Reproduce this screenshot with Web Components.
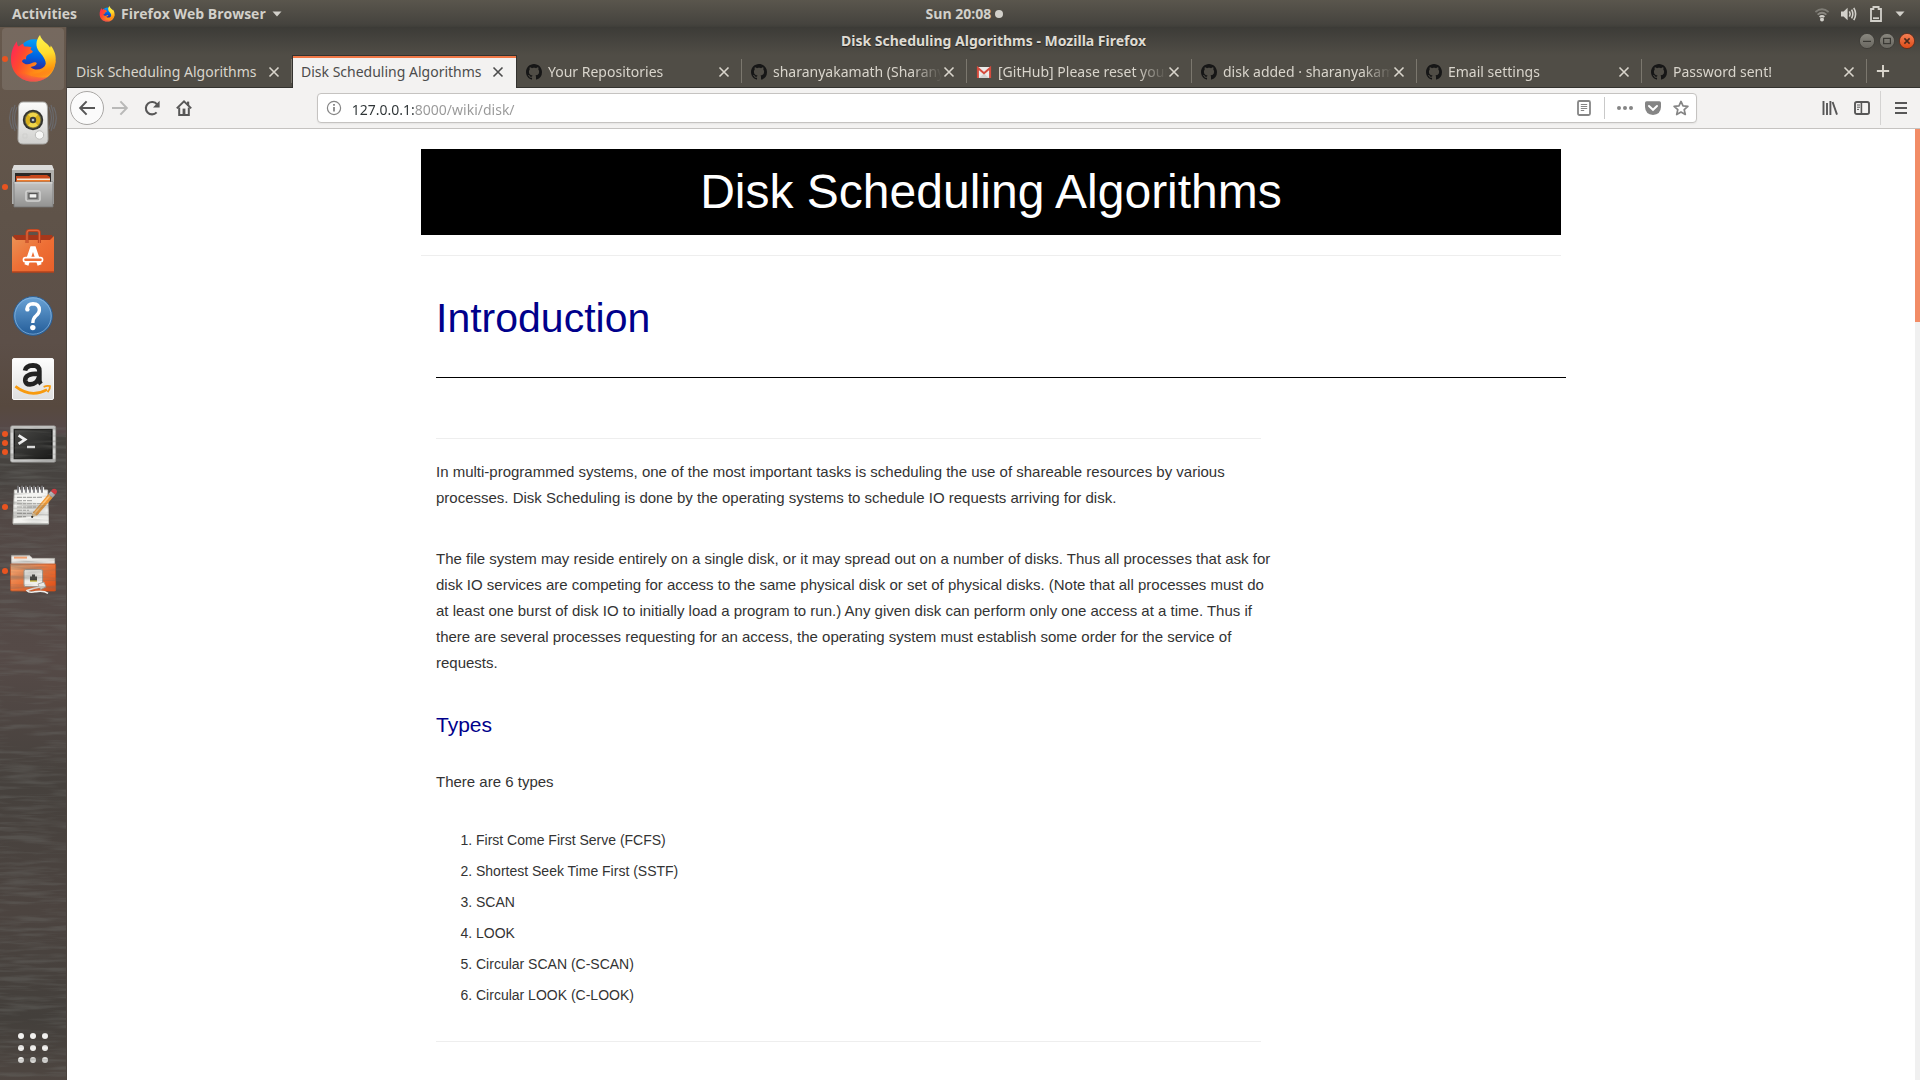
<!DOCTYPE html>
<html lang="en">
<head>
<meta charset="utf-8">
<title>Disk Scheduling Algorithms - Mozilla Firefox</title>
<style>
  html, body { height: 100%; }
  body { margin: 0; display: flex; flex-direction: column; overflow: hidden; background: #fff;
         font-family: "Noto Sans", "Open Sans", sans-serif; font-size: 14px; }
  .desk { display: flex; flex: 1; min-height: 0; }
  browser-window { flex: 1; min-width: 0; }
</style>
</head>
<body>
<top-bar></top-bar>
<div class="desk">
  <side-dock>
    <dock-item icon="firefox" label="Firefox Web Browser" windows="1" active></dock-item>
    <dock-item icon="rhythmbox" label="Rhythmbox"></dock-item>
    <dock-item icon="files" label="Files" windows="1"></dock-item>
    <dock-item icon="software" label="Ubuntu Software"></dock-item>
    <dock-item icon="help" label="Help"></dock-item>
    <dock-item icon="amazon" label="Amazon"></dock-item>
    <dock-item icon="terminal" label="Terminal" windows="3"></dock-item>
    <dock-item icon="gedit" label="Text Editor" windows="1"></dock-item>
    <dock-item icon="netfolder" label="Network Folder" windows="1"></dock-item>
    <dock-item slot="end" icon="grid" label="Show Applications"></dock-item>
  </side-dock>
  <browser-window>
    <span slot="title">Disk Scheduling Algorithms - Mozilla Firefox</span>
    <browser-tab slot="tabs">Disk Scheduling Algorithms</browser-tab>
    <browser-tab slot="tabs" active>Disk Scheduling Algorithms</browser-tab>
    <browser-tab slot="tabs" icon="github">Your Repositories</browser-tab>
    <browser-tab slot="tabs" icon="github">sharanyakamath (Sharanya Kamath)</browser-tab>
    <browser-tab slot="tabs" icon="gmail">[GitHub] Please reset your password</browser-tab>
    <browser-tab slot="tabs" icon="github">disk added · sharanyakamath</browser-tab>
    <browser-tab slot="tabs" icon="github">Email settings</browser-tab>
    <browser-tab slot="tabs" icon="github">Password sent!</browser-tab>
    <wiki-page></wiki-page>
  </browser-window>
</div>

<script>
const ICONS = {
  firefox: ['0 0 48 48', `
    <defs>
      <linearGradient id="g" x1="0.5" y1="0" x2="0.4" y2="1"><stop offset="0" stop-color="#00a0fa"/><stop offset=".55" stop-color="#0060df"/><stop offset="1" stop-color="#3a1a8a"/></linearGradient>
      <linearGradient id="f" x1="0" y1=".3" x2="1" y2=".7"><stop offset="0" stop-color="#ff2c50"/><stop offset=".25" stop-color="#ff4a2e"/><stop offset=".6" stop-color="#ff8a16"/><stop offset="1" stop-color="#ffa518"/></linearGradient>
      <linearGradient id="t" x1=".3" y1="0" x2=".4" y2="1"><stop offset="0" stop-color="#fff44f"/><stop offset=".45" stop-color="#ffdc2e"/><stop offset=".8" stop-color="#ff980e"/><stop offset="1" stop-color="#ff5a28" stop-opacity="0"/></linearGradient>
      <linearGradient id="b" x1="0" y1="0" x2="0" y2="1"><stop offset="0.6" stop-color="#e31587" stop-opacity="0"/><stop offset="1" stop-color="#e31587" stop-opacity=".55"/></linearGradient>
    </defs>
    <circle cx="25" cy="20.5" r="16.3" fill="url(#g)"/>
    <path fill="url(#f)" d="M8 6.3C7.8 9 8.4 10.8 9.8 11.6 11 10.3 12.6 9.3 14.6 8.6 14.2 9.8 14.6 10.8 15.6 11.6 18 11.2 20.4 11.4 22.6 12.2 21.8 13 21.4 14 21.8 15 23 15.4 23.8 16 23.8 17 22.4 18.8 19.6 19 18 20.4 16.8 21.8 17 23.4 17.2 24.6 15.6 24 13.6 24.4 13 26.4 15 29.4 19 30 22.4 28.2 25 26.8 27.6 27 27.8 28.6 27 31 24 31.6 21.6 32 26 36.4 34 35 37 29 39.4 24 38 19 35 15L46.6 26C46 38.4 36.6 46.6 24.6 46.6 11.8 46.6 2 37.4 2 24.4 2 17 4.2 11 8 6.3Z"/>
    <path fill="url(#b)" d="M2 24.4C2 37.4 11.8 46.6 24.6 46.6 30 46.6 35 45 39 42 28 44 10 40 2 24.4Z"/>
    <path fill="url(#t)" d="M31 0C26.6 5.6 26.4 11.4 30 16.4 35 22 38.8 27 35.6 33 33 38 27 39.6 21 37.6 24 44.6 34 45.6 40.6 39 46.4 33 47.8 25 46 18.6 45 15.4 43.4 12 41.6 10.4 41.6 11.4 41.6 12 41 12.6 39.4 8.6 32.6 6.4 31 0Z"/>`],
  rhythmbox: ['0 0 48 48', `
    <defs><linearGradient id="w" x1="0" y1="0" x2="0" y2="1"><stop offset="0" stop-color="#fbfbfa"/><stop offset="1" stop-color="#d0d0ce"/></linearGradient></defs>
    <g fill="none" stroke="#7488a0" stroke-opacity=".4" stroke-width="1.2"><path d="M6 6Q1 19 6 32M3.4 8Q-2 19 3.4 30M42 6Q47 19 42 32M44.6 8Q50 19 44.6 30M8 8Q3 19 8 30M40 8Q45 19 40 30"/></g>
    <path d="M14 3H34Q38 3 38.4 8L39 40Q39 45 34 45H14Q9 45 9 40L9.6 8Q10 3 14 3Z" fill="url(#w)" stroke="#a9a9a6"/>
    <circle cx="24" cy="21" r="10.2" fill="#33332f"/><circle cx="24" cy="21" r="8.4" fill="#6f6b40"/><circle cx="24" cy="21" r="7.4" fill="#d9b01c"/><path d="M24 21L19 15.6Q24 12 29 15.6ZM24 21L19 26.4Q24 30 29 26.4Z" fill="#f0d64c"/><circle cx="24" cy="21" r="3.2" fill="#3c3c3a"/><circle cx="24" cy="21" r="1.3" fill="#b8c4d0"/>
    <circle cx="30.5" cy="36" r="4.2" fill="#f6f6f5" stroke="#bcbcba"/><path d="M14 35h4v4h-4z" fill="none" stroke="#cfcfcd"/>`],
  files: ['0 0 48 48', `
    <defs><linearGradient id="s" x1="0" y1="0" x2="0" y2="1"><stop offset="0" stop-color="#c4c4c3"/><stop offset="1" stop-color="#929291"/></linearGradient></defs>
    <path d="M5 2H43L45 7V41H3V7Z" fill="#b0b0ae"/><path d="M5 2H43L45 7H3Z" fill="#dcdcdb"/>
    <path d="M6 10H42V20H6Z" fill="#2c2826"/>
    <path d="M7 13H20L22 12H38L41 14V20H7Z" fill="#c8481c"/><path d="M8 15.4H41V20H8Z" fill="#f6e9d8"/><path d="M8 17H41V20H8Z" fill="#ef7d2e"/>
    <path d="M5 19H44V44H5Z" fill="url(#s)" stroke="#777" stroke-width=".8"/><path d="M5.4 19.8H43.6" stroke="#e3e3e2" stroke-width="1"/>
    <rect x="17" y="28" width="14" height="10" rx="1.6" fill="#9a9a99" stroke="#d2d2d1" stroke-width="1.6"/><rect x="20" y="30.6" width="8" height="4.6" fill="#f2f2f1" stroke="#555" stroke-width="1.2"/>`],
  software: ['0 0 48 48', `
    <defs><linearGradient id="o" x1="0" y1="0" x2="1" y2="1"><stop offset="0" stop-color="#eb9356"/><stop offset=".5" stop-color="#ee6f35"/><stop offset="1" stop-color="#e8602a"/></linearGradient></defs>
    <path d="M5 8H43L45 13H3Z" fill="#a6371a"/>
    <path d="M3 9L7 13H41L45 9V45H3Z" fill="url(#o)"/><path d="M3 45H45" stroke="#b5431d" stroke-width="1.4"/>
    <path d="M18 16V6Q18 3.4 20.4 3.4H28Q30.4 3.4 30.4 6V16" fill="none" stroke="#b8421f" stroke-width="3"/><path d="M18 16V6Q18 3.4 20.4 3.4H28Q30.4 3.4 30.4 6V16" fill="none" stroke="#e2683c" stroke-width="1.2"/>
    <path d="M17.4 38L23 21.4H25L30.6 38" fill="none" stroke="#fff" stroke-width="4.2"/><rect x="14.4" y="30.6" width="19.2" height="4.2" rx="2.1" fill="#ee7038" stroke="#fff" stroke-width="1.6"/>`],
  help: ['0 0 48 48', `
    <defs><linearGradient id="h" x1="0" y1="0" x2="0" y2="1"><stop offset="0" stop-color="#6aa3d6"/><stop offset="1" stop-color="#235c98"/></linearGradient></defs>
    <circle cx="24" cy="25" r="19.4" fill="url(#h)" stroke="#2d5e92" stroke-width="1"/><circle cx="24" cy="25" r="18.2" fill="none" stroke="#8dbbe2" stroke-opacity=".7" stroke-width="1"/>
    <path d="M18 18Q18.6 13 24 12.8 30.2 13 30.4 19 30.2 22.4 26.8 25 24 27.4 23.8 32" fill="none" stroke="#fff" stroke-width="3.4"/><circle cx="18.4" cy="18.4" r="2.2" fill="#fff"/><circle cx="23.8" cy="36.6" r="2.7" fill="#fff"/>`],
  amazon: ['0 0 48 48', `
    <defs><linearGradient id="z" x1="0" y1="0" x2="0" y2="1"><stop offset="0" stop-color="#fdfdfd"/><stop offset="1" stop-color="#dedede"/></linearGradient></defs>
    <rect x="3.5" y="3.5" width="41" height="41" rx="1.5" fill="url(#z)" stroke="#f8f8f8"/>
    <path d="M16 15.6Q17 10.6 24 10.4 30.4 10.6 30.4 16V25.4Q30.6 27.4 32 29M30 18.6Q15.8 18.4 16.2 25.4 16.6 29.4 21 29.4 28 29.4 30 22" fill="none" stroke="#222" stroke-width="4.6"/>
    <path d="M6.4 31.4Q22 43.4 38 34.6" fill="none" stroke="#f79a0e" stroke-width="2.6"/><path d="M34.6 31.8Q38.4 30.4 41 31.2 41.4 34 38.6 37.2" fill="none" stroke="#f79a0e" stroke-width="1.9"/>`],
  terminal: ['0 0 48 48', `
    <defs><linearGradient id="k" x1="0" y1="0" x2="1" y2="1"><stop offset="0" stop-color="#474745"/><stop offset="1" stop-color="#1c1c1b"/></linearGradient></defs>
    <rect x="1.6" y="7" width="45" height="36" rx="1.6" fill="#d6d6d5" stroke="#a5a5a3"/><rect x="4.6" y="9.8" width="39" height="30.4" fill="#161615"/><rect x="6" y="11.2" width="36.2" height="27.6" fill="url(#k)"/>
    <path d="M9.6 16.4L16 20.6 9.6 24.8" fill="none" stroke="#f0f0f0" stroke-width="2.8"/><path d="M18 28H26" stroke="#f0f0f0" stroke-width="2.4"/>`],
  gedit: ['0 0 48 48', `
    <path d="M5.4 7H38.6L39.6 40.6H4Z" fill="#f4f4f1" stroke="#c9c9c5"/><path d="M4 41.4H39.6" stroke="#8b8b88" stroke-width="1.4"/>
    <path d="M9 3.4V9M13 3.4V9M17 3.4V9M21 3.4V9M25 3.4V9M29 3.4V9M33 3.4V9" stroke="#77777a" stroke-width="1.8" stroke-linecap="round"/><path d="M10.6 4V9M14.6 4V9M18.6 4V9M22.6 4V9M26.6 4V9M30.6 4V9M34.6 4V9" stroke="#fff" stroke-width="1"/>
    <path d="M8 14.4H34M8 17.6H24M8 20.8H32M8 24H28M8 27.2H20M8 30.4H30M8 33.6H18" stroke="#aeaeac" stroke-width="1.1" stroke-dasharray="5 1 3 1"/>
    <path d="M22.6 34.4L24.6 28.4 28 31.6Z" fill="#3a2c20"/><path d="M24 29.6L39.4 11 43.6 14.8 28 32.4 23 33.4Z" fill="#f29a35"/><path d="M25.6 30.4L41 12.4" stroke="#fbc57c" stroke-width="1.6"/><path d="M23.8 29.4L28 32.6 22.6 34.6Z" fill="#f2d6a8"/><circle cx="23.2" cy="33.8" r="1.1" fill="#222"/>
    <path d="M39.4 11L42 8 46.2 11.8 43.6 14.8Z" fill="#b9b9bb"/><path d="M42 8Q44 4.6 47 6.2 49.4 8.6 46.2 11.8Z" fill="#d9363e"/>`],
  netfolder: ['0 0 48 48', `
    <defs><linearGradient id="n" x1="0" y1="0" x2="1" y2="1"><stop offset="0" stop-color="#f2b07e"/><stop offset=".5" stop-color="#ea7339"/><stop offset="1" stop-color="#dd4b14"/></linearGradient></defs>
    <path d="M2.6 8.4H20.6L23.6 11.4H45.6V22H2.6Z" fill="#eceae6" stroke="#c8c6c2" stroke-width=".8"/><path d="M5 10.6H18" stroke="#f0a070" stroke-width="2"/>
    <path d="M1.4 17H46.6V43Q46.6 44 45.4 44H3Q1.6 44 1.6 43Z" fill="url(#n)" stroke="#c7501e" stroke-width=".8"/>
    <rect x="15" y="22.6" width="18.6" height="17" rx="1.6" fill="#efeeea" stroke="#a09a92"/><path d="M21 34V29.6H23V27.6H26V29.6H28V34Z" fill="#3b3b38"/><path d="M21 34H28" stroke="#c8b53c" stroke-width="1.4"/>
    <path d="M29 37L35 35 37 40 31.6 42.6Z" fill="#e8e8e6" stroke="#9a9a97" stroke-width=".8"/><path d="M31 40Q24 41 18 43.6 20 46.4 27 44.6 35 43.4 39 46.4" fill="none" stroke="#f0efec" stroke-width="1.6"/>`],
  grid: ['0 0 48 48', `<g fill="#f2f1ef"><circle cx="12" cy="12" r="3"/><circle cx="24" cy="12" r="3"/><circle cx="36" cy="12" r="3"/><circle cx="12" cy="24" r="3"/><circle cx="24" cy="24" r="3"/><circle cx="36" cy="24" r="3"/><circle cx="12" cy="36" r="3"/><circle cx="24" cy="36" r="3"/><circle cx="36" cy="36" r="3"/></g>`],
  github: ['0 0 16 16', `<path fill="#161616" d="M8 0C3.58 0 0 3.58 0 8c0 3.54 2.29 6.53 5.47 7.59.4.07.55-.17.55-.38 0-.19-.01-.82-.01-1.49-2.01.37-2.53-.49-2.69-.94-.09-.23-.48-.94-.82-1.13-.28-.15-.68-.52-.01-.53.63-.01 1.08.58 1.23.82.72 1.21 1.87.87 2.33.66.07-.52.28-.87.51-1.07-1.78-.2-3.64-.89-3.64-3.95 0-.87.31-1.59.82-2.15-.08-.2-.36-1.02.08-2.12 0 0 .67-.21 2.2.82.64-.18 1.32-.27 2-.27.68 0 1.36.09 2 .27 1.53-1.04 2.2-.82 2.2-.82.44 1.1.16 1.92.08 2.12.51.56.82 1.27.82 2.15 0 3.07-1.87 3.75-3.65 3.95.29.25.54.73.54 1.48 0 1.07-.01 1.93-.01 2.2 0 .21.15.46.55.38A8.013 8.013 0 0016 8c0-4.42-3.58-8-8-8z"/>`],
  gmail: ['0 0 16 16', `<path fill="#eceae8" d="M1 3H15V14H1Z"/><path d="M3 14L8 9.6 13 14Z" fill="#d4d2d0"/><path d="M1.9 14V4L8 9.2 14.1 4V14" fill="none" stroke="#d54b3d" stroke-width="2"/>`],
  close: ['0 0 12 12', `<path d="M1.5 1.5L10.5 10.5M10.5 1.5L1.5 10.5" stroke="currentColor" stroke-width="1.6" fill="none"/>`],
  plus: ['0 0 16 16', `<path d="M8 1V15M1 8H15" stroke="currentColor" stroke-width="2.2"/>`],
  caret: ['0 0 10 10', `<path d="M.5 2.5H9.5L5 7.5Z" fill="currentColor"/>`],
  wifi: ['0 0 16 16', `<g fill="none" stroke="currentColor" stroke-width="1.8"><path d="M1.4 6Q8 .6 14.6 6" opacity=".35"/><path d="M3.6 8.6Q8 5 12.4 8.6" opacity=".45"/><path d="M5.6 11Q8 9 10.4 11"/></g><circle cx="8" cy="13.4" r="2" fill="currentColor"/>`],
  volume: ['0 0 16 16', `<path d="M0 5.4H2.6L6.6 1.8V14.2L2.6 10.6H0Z" fill="currentColor"/><g fill="none" stroke="currentColor" stroke-width="1.6"><path d="M8.4 5.4Q10 8 8.4 10.6M10.6 3.6Q13 8 10.6 12.4M12.8 1.8Q16.4 8 12.8 14.2"/></g>`],
  battery: ['0 0 16 16', `<path d="M3 3H5.4V1H10.6V3H13V15H3Z" fill="none" stroke="currentColor" stroke-width="1.8"/><path d="M5 12.2H11" stroke="currentColor" stroke-width="1.8"/>`],
  back: ['0 0 16 16', `<path d="M16 8H1.4M7.6 1.4L1.2 8 7.6 14.6" fill="none" stroke="currentColor" stroke-width="2"/>`],
  forward: ['0 0 16 16', `<path d="M0 8H14.6M8.4 1.4L14.8 8 8.4 14.6" fill="none" stroke="currentColor" stroke-width="2"/>`],
  reload: ['0 0 16 16', `<path d="M12.6 12.4A6.2 6.2 0 1 1 13 4.4" fill="none" stroke="currentColor" stroke-width="2.1"/><path d="M15.6.8V7.4H9Z" fill="currentColor"/>`],
  home: ['0 0 16 16', `<path d="M.8 8.4L8 1.4 15.2 8.4" fill="none" stroke="currentColor" stroke-width="2"/><path d="M3.2 7.6V15H12.8V7.6" fill="none" stroke="currentColor" stroke-width="2"/><path d="M6.6 8.6H9.4V15H6.6Z" fill="currentColor"/><path d="M11 1.6H13.2V6H11Z" fill="currentColor"/>`],
  info: ['0 0 16 16', `<circle cx="8" cy="8" r="6.6" fill="none" stroke="currentColor" stroke-width="1.2"/><path d="M8 7V11.6M8 4V5.8" stroke="currentColor" stroke-width="1.8"/>`],
  reader: ['0 0 16 16', `<rect x="2" y="1" width="12" height="14" rx="1.4" fill="none" stroke="currentColor" stroke-width="1.8"/><path d="M4.8 4.5H11.2M4.8 6.5H11.2M4.8 8.5H11.2M4.8 10.5H8.2" stroke="currentColor" stroke-width="1"/>`],
  dots: ['0 0 16 16', `<g fill="currentColor"><circle cx="2" cy="8" r="2"/><circle cx="8" cy="8" r="2"/><circle cx="14" cy="8" r="2"/></g>`],
  pocket: ['0 0 16 16', `<path d="M1.6 1.2H14.4Q16 1.2 16 2.8V7Q15.6 14.6 8 15 .4 14.6 0 7V2.8Q0 1.2 1.6 1.2Z" fill="currentColor"/><path d="M4 6L8 9.8 12 6" fill="none" stroke="#fff" stroke-width="2" stroke-linecap="round"/>`],
  star: ['0 0 16 16', `<path d="M8 1.4L10 5.8 14.9 6.3 11.2 9.6 12.3 14.5 8 12 3.7 14.5 4.8 9.6 1.1 6.3 6 5.8Z" fill="none" stroke="currentColor" stroke-width="1.7" stroke-linejoin="round"/>`],
  library: ['0 0 16 16', `<path d="M1.5 1V15M5 3V15M8.4 1V15M10.6 2L15 14.6" stroke="currentColor" stroke-width="1.9" fill="none"/>`],
  sidebar: ['0 0 16 16', `<rect x="1" y="2" width="14" height="12" rx="1.8" fill="none" stroke="currentColor" stroke-width="1.9"/><path d="M7.4 2V14" stroke="currentColor" stroke-width="1.6"/><path d="M3 5H6M3 7.2H6M3 9.4H5" stroke="currentColor" stroke-width="1"/>`],
  menu: ['0 0 16 16', `<path d="M2 3H14M2 8H14M2 13H14" stroke="currentColor" stroke-width="2"/>`],
  winmin: ['0 0 16 16', `<defs><linearGradient id="m" x1="0" y1="0" x2="0" y2="1"><stop offset="0" stop-color="#8a8880"/><stop offset="1" stop-color="#68665f"/></linearGradient></defs><circle cx="8" cy="8" r="7.6" fill="url(#m)" stroke="#3a3934" stroke-width=".8"/><path d="M4 8.4H12" stroke="#3a3934" stroke-width="1.2"/>`],
  winmax: ['0 0 16 16', `<defs><linearGradient id="m" x1="0" y1="0" x2="0" y2="1"><stop offset="0" stop-color="#8a8880"/><stop offset="1" stop-color="#68665f"/></linearGradient></defs><circle cx="8" cy="8" r="7.6" fill="url(#m)" stroke="#3a3934" stroke-width=".8"/><rect x="4.6" y="5.4" width="6.8" height="5.2" fill="none" stroke="#3a3934" stroke-width="1.2"/>`],
  winclose: ['0 0 16 16', `<defs><linearGradient id="m" x1="0" y1="0" x2="0" y2="1"><stop offset="0" stop-color="#f58156"/><stop offset="1" stop-color="#df4a16"/></linearGradient></defs><circle cx="8" cy="8" r="7.6" fill="url(#m)" stroke="#5a2a1a" stroke-width=".8"/><path d="M5.4 5.4L10.6 10.6M10.6 5.4L5.4 10.6" stroke="#4a2a1c" stroke-width="1.5"/>`]
};

function define(name, css, render) {
  customElements.define(name, class extends HTMLElement {
    constructor() { super(); this.attachShadow({ mode: 'open' }); }
    connectedCallback() {
      this.shadowRoot.innerHTML = `<style>
        *, :host { box-sizing: border-box; }
        button { display: flex; align-items: center; justify-content: center; margin: 0; padding: 0; border: 0; background: none; color: inherit; font: inherit; cursor: pointer; }
        ${css}</style>${render(this)}`;
    }
  });
}

define('ui-icon', `:host { display: block; flex: none; width: var(--size, 16px); height: var(--size, 16px); } svg { display: block; width: 100%; height: 100%; overflow: visible; }`,
  el => { const [box, art] = ICONS[el.getAttribute('name')]; return `<svg viewBox="${box}" aria-hidden="true">${art}</svg>`; });

define('top-bar', `
  :host { display: grid; grid-template-columns: 1fr auto 1fr; align-items: center; flex: none; height: 27px; padding: 0 15px 0 12px;
    color: #d2d0ca; font: 700 14px/20px "Open Sans", sans-serif; background: linear-gradient(#5a564d, #45433e 90%, #3f3e39); text-shadow: 0 1px 2px #222; }
  .side { display: flex; align-items: center; }
  .left { gap: 22px; }
  .app { gap: 6px; }
  .app ui-icon:last-child { --size: 10px; }
  .right { justify-content: space-between; }
  .dot { width: 8px; height: 8px; margin-left: 4px; border-radius: 50%; background: #d2d0ca; }
  .status { gap: 11px; }
  .status ui-icon:last-child { --size: 10px; }`,
  () => `<div class="side left"><button>Activities</button>
      <button class="app"><ui-icon name="firefox"></ui-icon>Firefox Web Browser<ui-icon name="caret"></ui-icon></button></div>
    <button>Sun 20:08</button>
    <div class="side right"><span class="dot"></span>
      <button class="status" aria-label="System menu"><ui-icon name="wifi"></ui-icon><ui-icon name="volume"></ui-icon><ui-icon name="battery"></ui-icon><ui-icon name="caret"></ui-icon></button></div>`);

define('side-dock', `
  :host { display: grid; flex: none; width: 67px; border-right: 1px solid #4a433e; overflow: hidden;
    background: linear-gradient(#67594d, #5f5349 18%, #5c4f48 30%, #57493f 36%, #56494a 38.5%, #45423e 39%, #474340 43%, #524845 46%, #554a47 60%, #46413d 72%, #4c4440 84%, #433f3b 94%, #4e4641); }
  .grain, nav { grid-area: 1 / 1; }
  .grain { display: block; width: 100%; height: 100%; opacity: .4; }
  nav { display: flex; flex-direction: column; }
  .gap { flex: 1; }`,
  () => `<svg class="grain" aria-hidden="true"><filter id="r" x="0" y="0" width="100%" height="100%"><feTurbulence type="fractalNoise" baseFrequency="0.02 0.22" numOctaves="3" seed="4"/><feColorMatrix values="0 0 0 0 .14  0 0 0 0 .14  0 0 0 0 .13  3 0 0 0 -1.3"/></filter><rect y="38%" width="100%" height="62%" filter="url(#r)"/></svg>
    <nav aria-label="Dock"><slot></slot><div class="gap"></div><slot name="end"></slot></nav>`);

define('dock-item', `
  :host { display: grid; height: 64px; padding: 1px 2px; }
  button, .dots { grid-area: 1 / 1; }
  button { border-radius: 4px; --size: 48px; }
  :host([active]) button { background: rgba(255,255,255,.1); }
  .dots { display: flex; flex-direction: column; justify-content: center; justify-self: start; gap: 3px; z-index: 1; }
  .dots i { width: 6px; height: 6px; border-radius: 50%; background: #e95420; }`,
  el => `<button aria-label="${el.getAttribute('label')}"><ui-icon name="${el.getAttribute('icon')}"></ui-icon></button>
    <div class="dots">${'<i></i>'.repeat(+el.getAttribute('windows') || 0)}</div>`);

define('browser-tab', `
  :host { display: flex; flex: 0 1 225px; min-width: 0; align-items: center; padding: 1px 11px 0 9px; color: #d9d5cc; border-bottom: 1px solid #33322e;
    background: linear-gradient(#7b776e, #7b776e) right 4px / 1px 24px no-repeat; }
  :host([active]) { padding: 0 11px 0 8px; color: #4c4c4c; background: #f3f2f1; border: 1px solid #33322e; border-width: 1px 1px 0; box-shadow: inset 0 2px #f07746; }
  .tab { flex: 1; min-width: 0; justify-content: flex-start; gap: 6px; font-size: 14px; line-height: 20px; }
  .label { flex: 1; text-align: left; white-space: nowrap; overflow: hidden; }
  .fade { -webkit-mask-image: linear-gradient(to left, transparent, #000 30px); mask-image: linear-gradient(to left, transparent, #000 30px); }
  .close { --size: 12px; width: 14px; height: 20px; }`,
  el => `<button class="tab">${el.hasAttribute('icon') ? `<ui-icon name="${el.getAttribute('icon')}"></ui-icon>` : ''}<span class="label${el.hasAttribute('icon') ? ' fade' : ''}"><slot></slot></span></button>
    <button class="close" aria-label="Close tab"><ui-icon name="close"></ui-icon></button>`);

define('address-bar', `
  :host { display: flex; align-items: center; height: 30px; padding: 0 7px 0 8px; gap: 12px; border: 1px solid #c5c3c1; border-radius: 4px; background: #fff; color: #858585; box-shadow: 0 1px 2px rgba(0,0,0,.06); }
  label { display: flex; flex: 1; align-items: center; gap: 10px; }
  input { flex: 1; min-width: 0; height: 26px; padding: 2px 0 0; border: 0; outline: 0; font: 14px/24px "Noto Sans", sans-serif; color: #979797;
    background: linear-gradient(90deg, #2e3436 62px, #979797 62px); -webkit-background-clip: text; background-clip: text; -webkit-text-fill-color: transparent; }
  .line { width: 1px; height: 22px; background: #c9c9c9; }`,
  () => `<label><ui-icon name="info"></ui-icon><input type="text" value="127.0.0.1:8000/wiki/disk/" aria-label="Address"></label>
    <button aria-label="Reader view"><ui-icon name="reader"></ui-icon></button><span class="line"></span>
    <button aria-label="Page actions"><ui-icon name="dots"></ui-icon></button>
    <button aria-label="Save to Pocket"><ui-icon name="pocket"></ui-icon></button>
    <button aria-label="Bookmark"><ui-icon name="star"></ui-icon></button>`);

define('browser-window', `
  :host { display: flex; flex-direction: column; }
  .title { display: grid; grid-template-columns: 1fr auto 1fr; align-items: center; flex: none; height: 28px; padding: 0 5px; background: linear-gradient(#3c3b37, #504d46);
    color: #dfdbd2; font: 700 14px/20px "Noto Sans", sans-serif; text-shadow: 0 1px 1px #222; }
  .title .controls { grid-column: 3; display: flex; justify-content: flex-end; gap: 4px; }
  .title slot { grid-column: 2; display: block; }
  .tabs { display: flex; flex: none; height: 33px; background: #504d46; color: #d9d5cc; }
  .new { flex: 1; padding-right: 22px; border-bottom: 1px solid #33322e; --size: 14px; }
  .bar { display: flex; align-items: center; flex: none; height: 41px; padding: 0 11px 0 3px; background: #f3f2f1; border-bottom: 1px solid #c5c3c1; color: #575757; }
  .bar button { width: 32px; height: 34px; }
  .bar .back { width: 34px; border: 1px solid #a9a7a5; border-radius: 50%; background: #fbfbfb; }
  .bar .off { color: #b9b9b8; }
  .bar .menu { width: 16px; }
  .space { flex: 118 1 0; }
  address-bar { flex: 1378 1 0; }
  .rule { width: 1px; height: 34px; margin: 0 12px 0 2px; background: #d4d3d2; }
  .view { display: flex; flex: 1; min-height: 0; background: #fff; }
  .view main { flex: 1; min-width: 0; overflow: hidden; }
  .scroll { width: 5px; background: #f0f0f0; }
  .scroll i { display: block; height: 20.3%; background: #f28c66; }`,
  () => `<div class="title"><slot name="title"></slot><div class="controls">
      <button aria-label="Minimise"><ui-icon name="winmin"></ui-icon></button><button aria-label="Maximise"><ui-icon name="winmax"></ui-icon></button><button aria-label="Close"><ui-icon name="winclose"></ui-icon></button></div></div>
    <div class="tabs"><slot name="tabs"></slot><button class="new" aria-label="New tab"><ui-icon name="plus"></ui-icon></button></div>
    <div class="bar">
      <button class="back" aria-label="Back"><ui-icon name="back"></ui-icon></button>
      <button class="off" aria-label="Forward"><ui-icon name="forward"></ui-icon></button>
      <button aria-label="Reload"><ui-icon name="reload"></ui-icon></button>
      <button aria-label="Home"><ui-icon name="home"></ui-icon></button>
      <span class="space"></span><address-bar></address-bar><span class="space"></span>
      <button aria-label="Library"><ui-icon name="library"></ui-icon></button>
      <button aria-label="Sidebars"><ui-icon name="sidebar"></ui-icon></button>
      <span class="rule"></span>
      <button class="menu" aria-label="Menu"><ui-icon name="menu"></ui-icon></button>
    </div>
    <div class="view"><main><slot></slot></main><div class="scroll"><i></i></div></div>`);

define('wiki-page', `
  :host { display: block; max-width: 1140px; margin: 0 auto; padding-top: 20px; color: #333; font: 15px/26px "Liberation Sans", Arial, sans-serif; }
  h1, h2, h3, p, ol { margin: 0; font-weight: 400; }
  h1 { background: #000; color: #fff; font-size: 48px; line-height: 86px; text-align: center; }
  hr { height: 1px; margin: 20px 0; border: 0; background: #eee; }
  section { padding-left: 15px; }
  h2, h3 { color: #00008b; }
  h2 { padding-top: 18px; font-size: 41px; line-height: 48px; }
  hr.under { margin: 35px -5px 60px 0; background: #000; }
  article { max-width: 825px; }
  p { white-space: nowrap; }
  p + p { margin-top: 35px; }
  h3 { margin: 37px 0 32px; font-size: 21px; line-height: 24px; }
  ol { margin: 30px 0; padding-left: 40px; font-size: 14px; line-height: 31px; }`,
  () => `<h1>Disk Scheduling Algorithms</h1><hr>
    <section><h2>Introduction</h2><hr class="under">
      <article><hr>
        <p>In multi-programmed systems, one of the most important tasks is scheduling the use of shareable resources by various<br>
        processes. Disk Scheduling is done by the operating systems to schedule IO requests arriving for disk.</p>
        <p>The file system may reside entirely on a single disk, or it may spread out on a number of disks. Thus all processes that ask for<br>
        disk IO services are competing for access to the same physical disk or set of physical disks. (Note that all processes must do<br>
        at least one burst of disk IO to initially load a program to run.) Any given disk can perform only one access at a time. Thus if<br>
        there are several processes requesting for an access, the operating system must establish some order for the service of<br>
        requests.</p>
        <h3>Types</h3>
        <p>There are 6 types</p>
        <ol><li>First Come First Serve (FCFS)</li><li>Shortest Seek Time First (SSTF)</li><li>SCAN</li><li>LOOK</li><li>Circular SCAN (C-SCAN)</li><li>Circular LOOK (C-LOOK)</li></ol>
        <hr>
      </article></section>`);
</script>
</body>
</html>
